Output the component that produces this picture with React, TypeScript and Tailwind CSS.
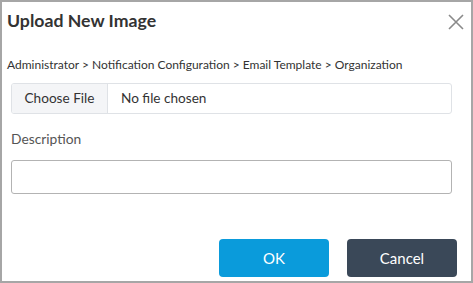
export default function App() {
    return (
        <div className="h-[283px] w-[473px] border-2 border-[#a6a6a6] bg-white font-['Lato','Open_Sans',sans-serif]">
            <div className="flex items-start justify-between pl-[5px] pr-[7px] pt-[7px]">
                <h1 className="text-[17.7px] font-bold leading-[24px] text-[#333333]">
                    Upload New Image
                </h1>
                <button className="mt-[5px] text-[#8a8a8a]" aria-label="Close">
                    <svg width="16" height="16" viewBox="0 0 16 16" fill="none">
                        <path
                            d="M1 1L15 15M15 1L1 15"
                            stroke="currentColor"
                            strokeWidth="1.6"
                        />
                    </svg>
                </button>
            </div>
            <p className="mt-[24px] pl-[5px] text-[12px] leading-[16px] text-[#333333]">
                Administrator &gt; Notification Configuration &gt; Email Template &gt; Organization
            </p>
            <div className="ml-[9px] mt-[10px] flex h-[31px] w-[441px] overflow-hidden rounded-[3px] border border-[#dfe2e6] text-[13.6px] text-[#333333]">
                <span className="flex w-[96px] items-center justify-center border-r border-[#dfe2e6] bg-[#f4f5f7]">
                    Choose File
                </span>
                <span className="flex items-center pl-[13px]">No file chosen</span>
            </div>
            <label className="ml-[9px] mt-[16px] block text-[13.8px] leading-[18px] text-[#555555]">
                Description
            </label>
            <input
                type="text"
                className="ml-[9px] mt-[12px] block h-[34px] w-[441px] rounded-[3px] border border-[#b3b3b3] outline-none"
            />
            <div className="mr-[14px] mt-[45px] flex justify-end gap-[18px]">
                <button className="h-[38px] w-[110px] rounded-[4px] bg-[#0a9bdb] text-[15px] text-white">
                    OK
                </button>
                <button className="h-[38px] w-[110px] rounded-[4px] bg-[#3a4858] text-[15px] text-white">
                    Cancel
                </button>
            </div>
        </div>
    );
}
